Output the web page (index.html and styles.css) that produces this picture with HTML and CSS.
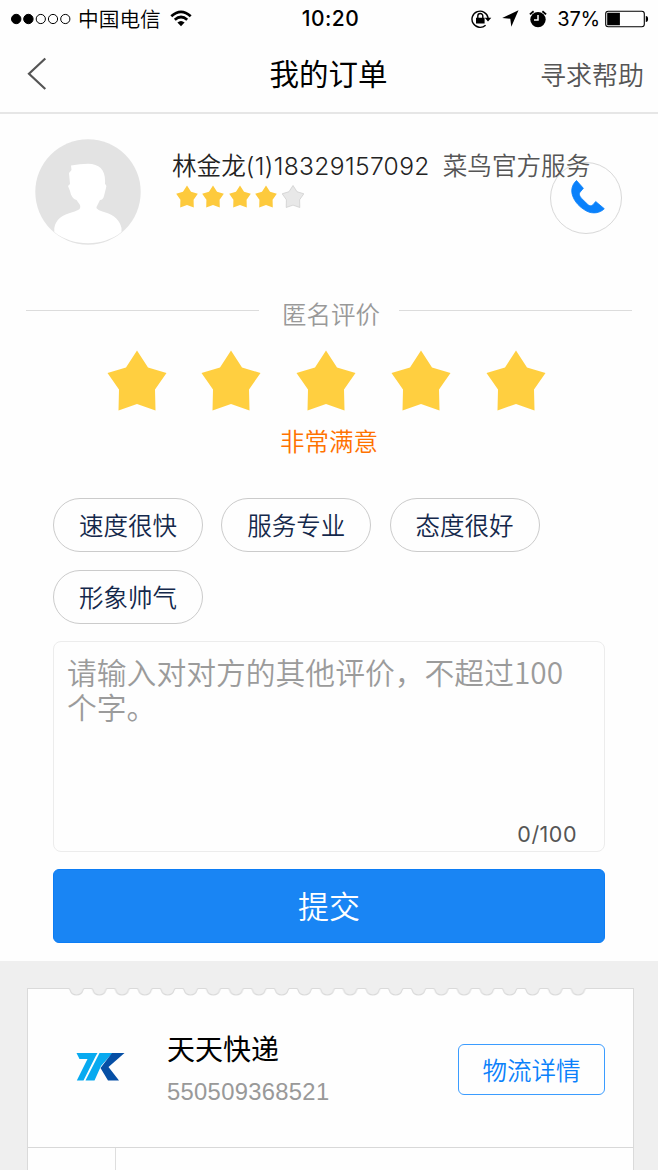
FILE: index.html
```html
<!DOCTYPE html>
<html lang="zh-CN">
<head>
<meta charset="utf-8">
<title>我的订单</title>
<link rel="stylesheet" href="styles.css">
</head>
<body>
<svg class="defs" aria-hidden="true">
  <symbol id="star" viewBox="0 0 60 61"><path d="M30 .5 41 17.5 59.5 23 48 39.5 48.5 60.5 30 54 11.5 60.5 12 39.5 .5 23 19 17.5Z" stroke-linejoin="round"/></symbol>
</svg>
<div class="status">
  <div class="status-left">
    <svg class="signal" width="60" height="12" viewBox="0 0 60 12"><g stroke="#000"><circle cx="5.2" cy="6" r="4.7"/><circle cx="17.4" cy="6" r="4.7"/><g fill="none"><circle cx="29.8" cy="6" r="4.6"/><circle cx="42" cy="6" r="4.6"/><circle cx="54.3" cy="6" r="4.6"/></g></g></svg>
    <span class="carrier">中国电信</span>
    <svg class="wifi" width="22" height="17" viewBox="0 0 22 17"><g fill="none" stroke="#000" stroke-width="2.7"><path d="M1.3 6.2Q11-2.6 20.7 6.2"/><path d="M4.8 9.8Q11 4.2 17.2 9.8"/></g><path d="M7.4 12.6Q11 9.4 14.6 12.6L11 16.2Z"/></svg>
  </div>
  <div class="clock">10:20</div>
  <div class="status-right">
    <svg class="lock" width="21" height="20" viewBox="0 0 21 20"><path d="M14.6 16.2A8.1 8.1 0 1 1 17.1 9" fill="none" stroke="#000" stroke-width="1.4"/><path d="M13.7 8.7h6.6L17 12.5ZM5 8.8h8.6v5.8H5Z"/><path d="M6.8 9V7a2.5 2.5 0 0 1 5 0v2" fill="none" stroke="#000" stroke-width="1.4"/></svg>
    <svg class="arrow" width="17" height="17" viewBox="0 0 17 17"><path d="M16.5.2 9.3 16.7 8.3 8.7.2 8Z"/></svg>
    <svg class="alarm" width="18" height="18" viewBox="0 0 18 18"><circle cx="9" cy="9.6" r="7.7"/><path d="M.9 4.4 4.6 1.2M17.1 4.4 13.4 1.2" stroke="#000" stroke-width="1.8"/><path d="M9 5v5H5" fill="none" stroke="#fff" stroke-width="1.5"/></svg>
    <span class="percent">37%</span>
    <svg class="battery" width="44" height="18" viewBox="0 0 44 18"><rect x=".7" y="1.2" width="38.6" height="15.6" rx="2.5" fill="#fff" stroke="#000" stroke-width="1.1"/><path d="M2.2 2.7h12.7v12.6H2.2ZM40.8 6q2.3 0 2.3 3t-2.3 3Z"/></svg>
  </div>
</div>
<header class="nav">
  <svg class="back" width="20" height="34" viewBox="0 0 20 34"><path d="M18.3 1.5 2 16.8 18.3 32" fill="none" stroke="#555" stroke-width="2.2"/></svg>
  <h1 class="title">我的订单</h1>
  <a class="help">寻求帮助</a>
</header>
<main>
  <section class="courier">
    <svg class="avatar" width="106" height="106" viewBox="0 0 106 106"><circle cx="53" cy="53" r="52.7" fill="#e3e3e3"/><path d="M19.3 93V89C21 80 27 76 38 73C44 71 46 70 45 66L41.5 61C38 60 36 57 35 52L33 47Q34 46 35 45L34 34 36.5 31 36 26.5Q45 25 53 24.7C65 25 71 31 70 45Q72 46 71 49L69 57Q68 61 65 61L62 67C60 70 64 71 69 73C80 76 85 82 86.5 89V93C68 108 38 108 19.3 93Z" fill="#fff"/></svg>
    <div class="courier-info">
      <div class="courier-line"><span class="name">林金龙<span class="phone-number">(1)18329157092</span></span><span class="org">菜鸟官方服务</span></div>
      <div class="score">
        <svg><use href="#star"/></svg><svg><use href="#star"/></svg><svg><use href="#star"/></svg><svg><use href="#star"/></svg><svg class="off"><use href="#star"/></svg>
      </div>
    </div>
    <a class="call"><svg width="34" height="34" viewBox="0 0 34 34"><path d="M5.5.5 12.4 8.3 9.2 12C7.5 14 8.8 16.4 10.4 18.2L16.3 24C18 25.8 20.1 26.5 22 24.7L24.7 21.5 33.3 28.7C29.5 33 21.5 34.4 15.4 31C7 26.6.6 18.2.7 10.4.8 6.8 2.7 2.7 5.5.5Z" fill="#0a81fb" stroke="#0a81fb" stroke-width=".8"/></svg></a>
  </section>
  <section class="review">
    <div class="divider"><span>匿名评价</span></div>
    <div class="stars"><svg><use href="#star"/></svg><svg><use href="#star"/></svg><svg><use href="#star"/></svg><svg><use href="#star"/></svg><svg><use href="#star"/></svg></div>
    <div class="verdict">非常满意</div>
    <div class="tags"><span>速度很快</span><span>服务专业</span><span>态度很好</span><span>形象帅气</span></div>
    <div class="comment"><p>请输入对对方的其他评价，不超过100<br>个字。</p><div class="count">0/100</div></div>
    <button class="submit">提交</button>
  </section>
</main>
<section class="orders">
  <article class="ticket">
    <svg class="teeth" width="525" height="9">
      <defs><pattern id="tooth" width="22.8" height="9" patternUnits="userSpaceOnUse"><path d="M3.4 0Q4.8.5 5 2C7 8.6 16 8.6 18 2Q18.2.5 19.6 0Z" fill="#efefef"/><path d="M3.2.5Q4.8.7 5 2C7 8.6 16 8.6 18 2Q18.2.7 19.8.5" fill="none" stroke="#d9d9d9"/></pattern></defs>
      <rect width="524.4" height="9" fill="url(#tooth)"/>
    </svg>
    <div class="shipment">
      <svg class="logo" width="50" height="30" viewBox="0 0 50 30"><path d="M.5 1H21.5L19.5 4.5 7.5 28.5H.8L11.5 7H3.5ZM23.5 1H36.5L25 14 18.5 28.5H9.5L21.5 5Z" fill="#08aaf0"/><path d="M36 1H48.5L32.5 15 43 28.5H32L24.5 16Z" fill="#064fa5"/></svg>
      <div class="shipment-info"><div class="company">天天快递</div><div class="tracking">550509368521</div></div>
      <a class="detail">物流详情</a>
    </div>
    <div class="timeline"><div class="rail"></div></div>
  </article>
</section>
</body>
</html>
```
FILE: styles.css
```css
* { box-sizing: border-box; }
body { margin: 0; width: 658px; height: 1170px; overflow: hidden; background: #fefefe; color: #000; font-family: Inter, "Noto Sans CJK SC", sans-serif; font-weight: 350; }
svg { display: block; flex: none; }
.defs { display: none; }

.status { height: 36px; display: grid; grid-template-columns: 1fr auto 1fr; align-items: center; padding: 0 9px 0 11px; font-size: 20px; line-height: 36px; font-weight: 400; white-space: nowrap; }
.status-left, .status-right { display: flex; align-items: center; }
.status-right { justify-content: flex-end; }
.carrier { margin: 1px 0 -1px 7px; font-size: 20.7px; font-weight: 350; }
.wifi { margin-left: 9px; }
.clock { font-size: 21px; font-weight: 500; letter-spacing: .5px; padding: 1px 0 0 1px; }
.arrow { margin-left: 10px; }
.alarm { margin-left: 10px; }
.percent { margin: 1px 0 0 10px; letter-spacing: -.2px; }
.battery { margin-left: 5px; }

.nav { height: 78px; padding: 0 14px 0 27px; display: grid; grid-template-columns: 1fr auto 1fr; align-items: center; border-bottom: 2px solid #e6e6e6; }
.title { margin: 0 14px 0 0; font-size: 29.5px; line-height: 40px; font-weight: 400; }
.help { justify-self: end; font-size: 26px; line-height: 40px; padding-top: 4px; color: #555; }

.courier { height: 176px; padding: 24px 36px 0 35px; display: flex; align-items: flex-start; }
.avatar { margin-top: .5px; }
.courier-info { margin: 12px 0 0 31px; width: 378px; white-space: nowrap; position: relative; z-index: 1; }
.courier-line { display: flex; font-size: 24.6px; line-height: 33px; height: 32px; color: #222; }
.phone-number { letter-spacing: .35px; }
.org { margin-left: 13px; color: #555; }
.score { display: flex; gap: 4.4px; margin: 3px 0 0 4px; }
.score svg { width: 22px; height: 23px; fill: #fdca3d; }
.score .off { fill: #e8e8e8; stroke: #ccc; stroke-width: 2px; }
.call { width: 72px; height: 72px; flex: none; margin-top: 24px; border: 1.5px solid #d8d8d8; border-radius: 50%; display: flex; align-items: center; justify-content: center; padding: 0 0 3px 3px; }

.review { height: 671px; padding: 0 53px; display: flex; flex-direction: column; }
.divider { margin: 8px -27px 0; height: 32px; display: flex; align-items: flex-start; color: #999; font-size: 24.5px; line-height: 34px; gap: 23px; }
.divider::before, .divider::after { content: ""; flex: 1; height: 1px; margin-top: 12px; background: #dcdcdc; }
.divider span { margin: 0 -4px 0 0; }
.stars { display: flex; gap: 34.8px; margin: 20px 0 0 53.5px; }
.stars svg { width: 60px; height: 61px; fill: #ffcf40; }
.verdict { margin-top: 14px; text-align: center; font-size: 24.5px; line-height: 34px; height: 32px; color: #ff7200; }
.tags { margin-top: 41px; display: flex; flex-wrap: wrap; gap: 17.5px 18.3px; }
.tags span { width: 150px; height: 54px; border: 1px solid #cbcbcb; border-radius: 27px; text-align: center; font-size: 24.5px; line-height: 54px; color: #14284b; }
.comment { margin-top: 17.5px; height: 211px; border: 1.5px solid #ececec; border-radius: 8px; padding: 12px 27px 0 13px; display: flex; flex-direction: column; justify-content: space-between; }
.comment p { margin: 0 -16px 0 0; font-size: 29.8px; line-height: 35px; color: #9b9b9b; font-family: "Noto Sans CJK SC", sans-serif; }
.count { text-align: right; font-size: 21.5px; line-height: 30px; color: #555; margin-bottom: 2px; letter-spacing: .5px; font-weight: 400; }
.submit { margin: 17px 0 0; height: 74px; border: 1px solid #0c7df5; border-radius: 6px; background: #1985f4; color: #fff; font: 350 31px/72px Inter, "Noto Sans CJK SC", sans-serif; padding: 1px 0 0; }

.orders { height: 210px; padding: 27px 24px 0 27px; background: #efefef; }
.ticket { height: 200px; background: #fefefe; border: 1px solid #dadada; }
.teeth { margin: -1px 0 0 37px; }
.shipment { height: 151px; padding: 0 28px 6px 49px; display: flex; align-items: center; border-bottom: 1px solid #d8d8d8; }
.logo { margin: -5px 0 0 -1px; }
.shipment-info { margin: -1px 0 0 41px; flex: 1; }
.company { font-size: 28px; line-height: 40px; font-weight: 400; }
.tracking { margin-top: 7px; font: 23.8px/30px "Liberation Sans", Arial, sans-serif; color: #999; letter-spacing: .3px; }
.detail { width: 147px; height: 51px; border: 1.5px solid #3b9cff; border-radius: 6px; text-align: center; font-size: 24.5px; line-height: 53px; color: #0a81fb; }
.rail { width: 88px; height: 60px; border-right: 1.5px solid #dedede; }
```
